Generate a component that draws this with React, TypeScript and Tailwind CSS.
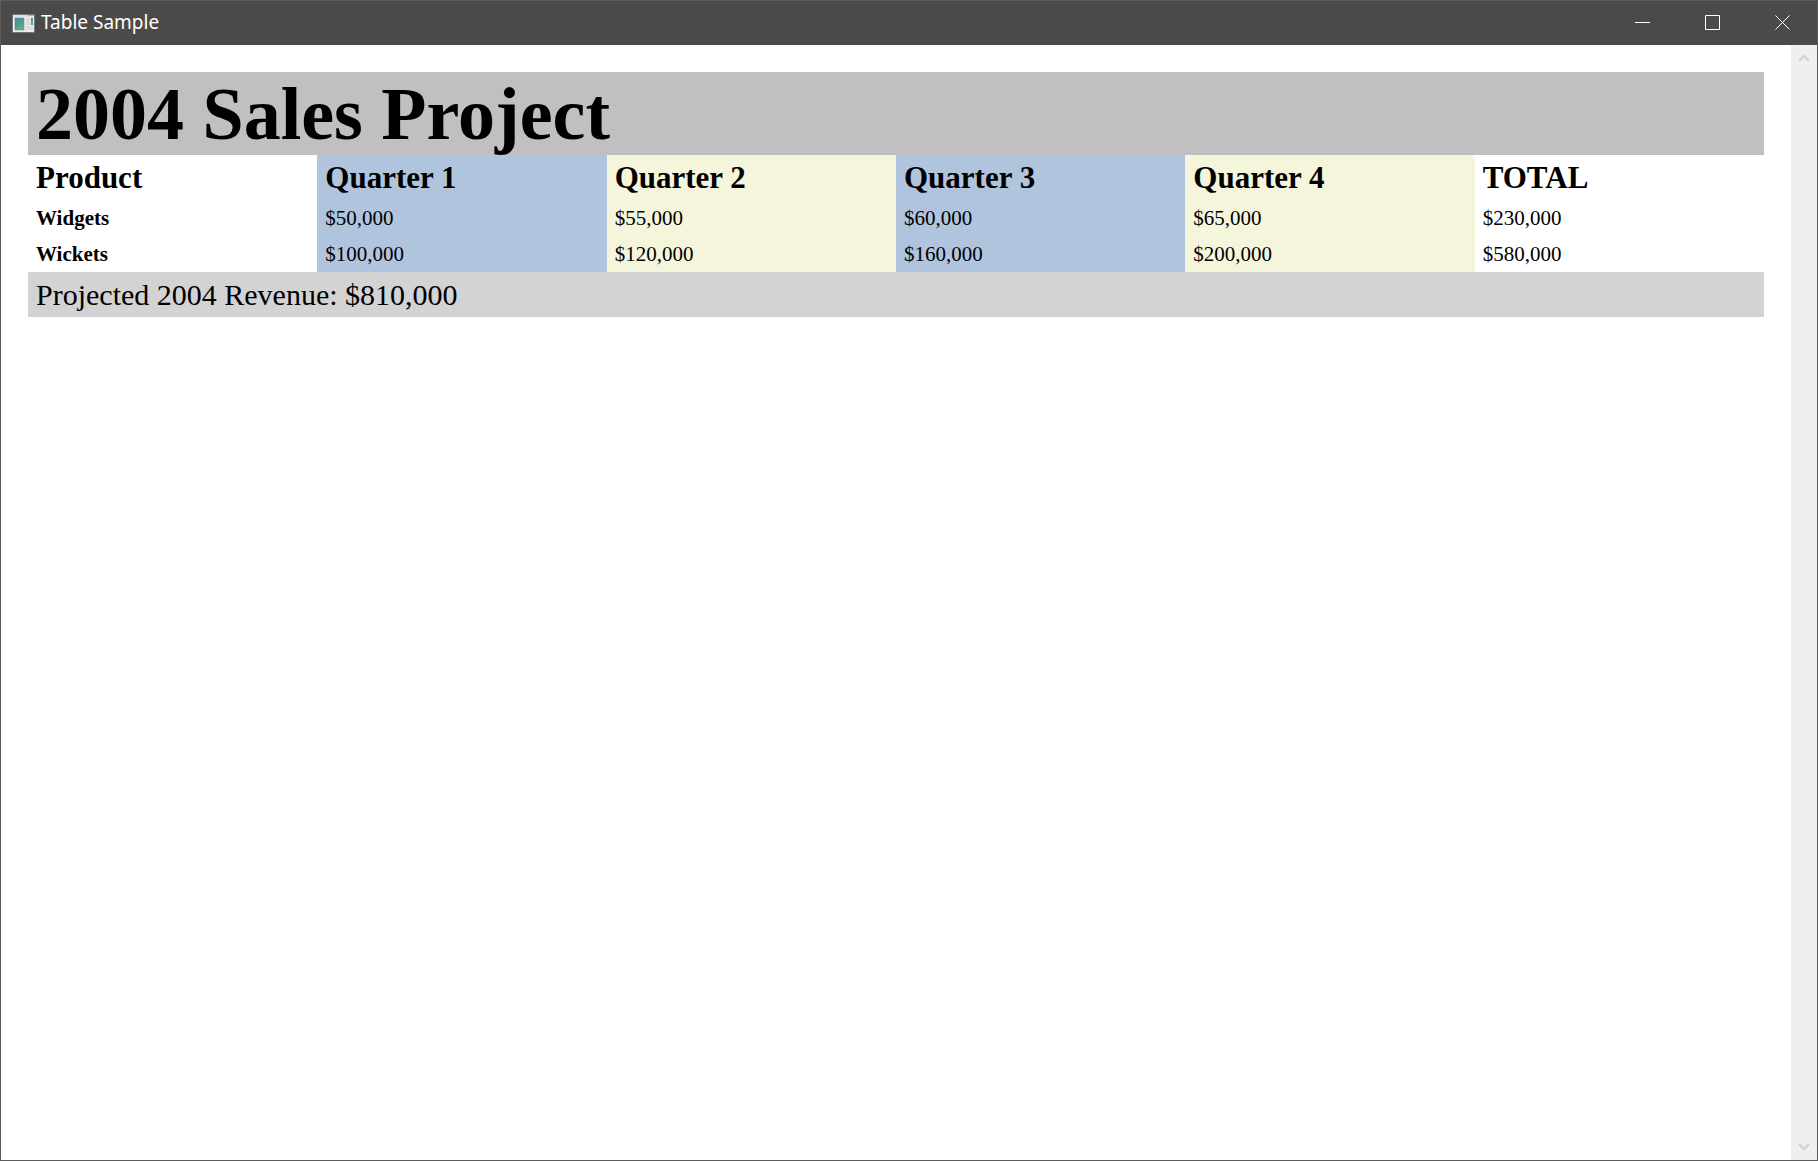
type Row = { product: string; values: string[] };

const headings = ["Product", "Quarter 1", "Quarter 2", "Quarter 3", "Quarter 4", "TOTAL"];

const rows: Row[] = [
  { product: "Widgets", values: ["$50,000", "$55,000", "$60,000", "$65,000", "$230,000"] },
  { product: "Wickets", values: ["$100,000", "$120,000", "$160,000", "$200,000", "$580,000"] },
];

const columnColors = [
  "bg-white",
  "bg-[#b0c4de]",
  "bg-[#f5f5dc]",
  "bg-[#b0c4de]",
  "bg-[#f5f5dc]",
  "bg-white",
];

function AppIcon() {
  return (
    <svg width="23" height="19" viewBox="0 0 23 19" aria-hidden="true">
      <defs>
        <linearGradient id="pane" x1="0" y1="0" x2="0.6" y2="1">
          <stop offset="0" stopColor="#4a7fa8" />
          <stop offset="1" stopColor="#5cb574" />
        </linearGradient>
      </defs>
      <rect width="23" height="19" rx="1" fill="#74787c" />
      <rect x="1" y="1" width="21" height="17" fill="#ececee" />
      <rect x="1" y="1" width="21" height="2" fill="#dcdfe4" />
      <rect x="16" y="1" width="6" height="1" fill="#a9afb8" />
      <rect x="3" y="4" width="9" height="12" fill="url(#pane)" stroke="#567f93" strokeWidth="0.5" />
      <rect x="14" y="4" width="4" height="7" fill="#dadada" />
      <rect x="19" y="4" width="2" height="7" fill="url(#pane)" />
      <rect x="14" y="12" width="7" height="4" fill="#dedede" />
    </svg>
  );
}

function CaptionButton({ label, path }: { label: string; path: string }) {
  return (
    <button type="button" aria-label={label} className="flex h-full w-[69px] items-center justify-center text-white">
      <svg width="15" height="15" viewBox="0 0 15 15" fill="none" stroke="currentColor" aria-hidden="true">
        <path d={path} />
      </svg>
    </button>
  );
}

function ScrollButton({ label, path }: { label: string; path: string }) {
  return (
    <button type="button" aria-label={label} className="flex h-[26px] w-full items-center justify-center text-[#d2d2d2]">
      <svg width="12" height="10" viewBox="0 0 12 10" fill="none" stroke="currentColor" strokeWidth="2.4" aria-hidden="true">
        <path d={path} />
      </svg>
    </button>
  );
}

export default function App() {
  return (
    <div className="flex h-screen flex-col border border-[#5c5c5c] bg-white font-['Georgia','Liberation_Serif',serif] text-black">
      <header className="flex h-11 shrink-0 items-center bg-[#4c4a48] pl-[11px]">
        <AppIcon />
        <h1 className="ml-1.5 flex-1 pb-0.5 font-['Noto_Sans','Open_Sans',sans-serif] text-[19px] leading-7 text-white">
          Table Sample
        </h1>
        <div className="flex h-full gap-px pb-px">
          <CaptionButton label="Minimize" path="M0 7.5H15" />
          <CaptionButton label="Maximize" path="M0.5 0.5H14.5V14.5H0.5Z" />
          <CaptionButton label="Close" path="M0.5 0.5L14.5 14.5M14.5 0.5L0.5 14.5" />
        </div>
      </header>
      <div className="flex min-h-0 flex-1">
        <main className="min-w-0 flex-1 overflow-hidden p-[27px]">
          <table className="w-full table-fixed border-collapse text-left">
            <thead>
              <tr className="h-[83px] bg-[#c0c0c0]">
                <th colSpan={6} className="px-2 py-0 text-[74px] leading-[76px] font-bold">
                  2004 Sales Project
                </th>
              </tr>
              <tr className="h-[45px]">
                {headings.map((heading, i) => (
                  <th key={heading} scope="col" className={`px-2 py-0 text-[31px] leading-10 font-bold ${columnColors[i]}`}>
                    {heading}
                  </th>
                ))}
              </tr>
            </thead>
            <tbody className="text-[21px] leading-6">
              {rows.map((row) => (
                <tr key={row.product} className="h-9">
                  <th scope="row" className="px-2 py-0 font-bold">
                    {row.product}
                  </th>
                  {row.values.map((value, i) => (
                    <td key={i} className={`px-2 py-0 ${columnColors[i + 1]}`}>
                      {value}
                    </td>
                  ))}
                </tr>
              ))}
            </tbody>
            <tfoot>
              <tr className="h-[45px] bg-[#d3d3d3]">
                <td colSpan={6} className="px-2 py-0 text-[30px] leading-10">
                  Projected 2004 Revenue: $810,000
                </td>
              </tr>
            </tfoot>
          </table>
        </main>
        <div className="flex w-[26px] shrink-0 flex-col justify-between bg-[#efefef]">
          <ScrollButton label="Scroll up" path="M1 8L6 3L11 8" />
          <ScrollButton label="Scroll down" path="M1 2L6 7L11 2" />
        </div>
      </div>
    </div>
  );
}
